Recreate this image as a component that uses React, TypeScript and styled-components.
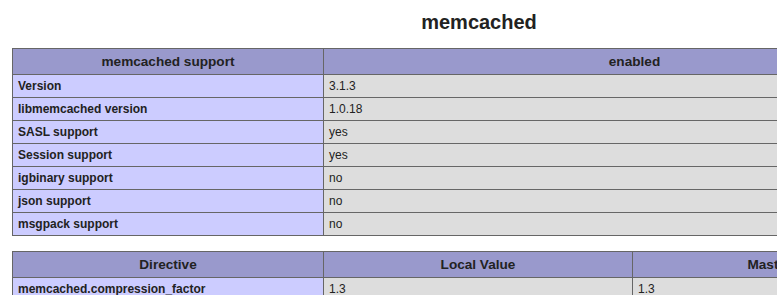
import React from 'react';
import styled, { createGlobalStyle } from 'styled-components';

const GlobalStyle = createGlobalStyle`
  html, body {
    margin: 0;
    padding: 0;
    background: #fff;
    color: #222;
    font-family: "Liberation Sans", Arial, sans-serif;
  }
  body {
    overflow: hidden;
  }
`;

export const Page = styled.div`
  width: 934px;
  margin-left: 12px;
  text-align: center;
`;

export const Title = styled.h2`
  font-size: 20px;
  line-height: 23px;
  font-weight: bold;
  margin: 11px 0 14px;
`;

export const InfoTable = styled.table`
  border-collapse: collapse;
  border: 0;
  width: 934px;
  text-align: left;
  margin-bottom: 15px;
`;

const cell = `
  border: 1px solid #666;
  vertical-align: baseline;
  padding: 4px 5px;
`;

export const HeadRow = styled.tr`
  background-color: #99c;
  font-weight: bold;
`;

export const HeadCell = styled.th<{ $width?: number }>`
  ${cell}
  font-size: 13.6px;
  line-height: 17px;
  text-align: center;
  width: ${(p) => (p.$width ? `${p.$width}px` : 'auto')};
`;

export const KeyCell = styled.td`
  ${cell}
  background-color: #ccf;
  width: 300px;
  font-weight: bold;
  font-size: 12px;
  line-height: 14px;
`;

export const ValueCell = styled.td`
  ${cell}
  background-color: #ddd;
  font-size: 12px;
  line-height: 14px;
`;

type Row = [string, ...string[]];

const support: Row[] = [
  ['Version', '3.1.3'],
  ['libmemcached version', '1.0.18'],
  ['SASL support', 'yes'],
  ['Session support', 'yes'],
  ['igbinary support', 'no'],
  ['json support', 'no'],
  ['msgpack support', 'no'],
];

const directives: Row[] = [
  ['memcached.compression_factor', '1.3', '1.3'],
  ['memcached.compression_threshold', '2000', '2000'],
];

type Column = { label: string; width?: number };

const Section = ({ head, rows }: { head: Column[]; rows: Row[] }): JSX.Element => (
  <InfoTable>
    <tbody>
      <HeadRow>
        {head.map((h) => (
          <HeadCell key={h.label} $width={h.width}>
            {h.label}
          </HeadCell>
        ))}
      </HeadRow>
      {rows.map(([key, ...values]) => (
        <tr key={key}>
          <KeyCell>{key}</KeyCell>
          {values.map((v, i) => (
            <ValueCell key={i}>{v}</ValueCell>
          ))}
        </tr>
      ))}
    </tbody>
  </InfoTable>
);

export default function App(): JSX.Element {
  return (
    <>
      <GlobalStyle />
      <Page>
        <Title>memcached</Title>
        <Section
          head={[{ label: 'memcached support', width: 300 }, { label: 'enabled' }]}
          rows={support}
        />
        <Section
          head={[
            { label: 'Directive', width: 300 },
            { label: 'Local Value', width: 298 },
            { label: 'Master Value' },
          ]}
          rows={directives}
        />
      </Page>
    </>
  );
}
